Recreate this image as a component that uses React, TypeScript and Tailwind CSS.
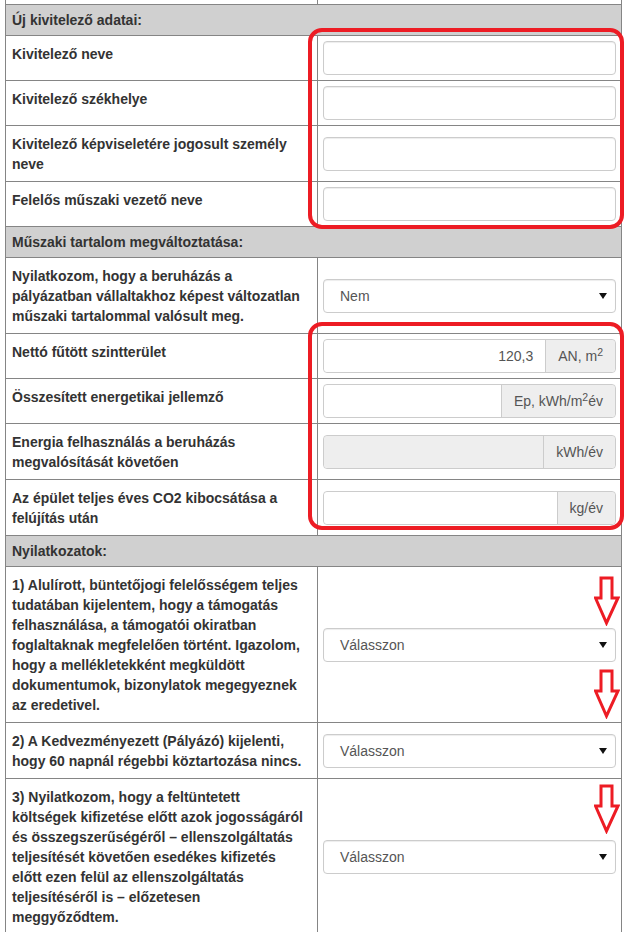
import React from "react";

const cellBorder = "border-[#858585]";

function Header({ title }: { title: string }) {
	return (
		<div className={`bg-[#d0d0d0] border-b ${cellBorder} px-[6px] py-[5px] font-bold text-[#333]`}>
			{title}
		</div>
	);
}

function Row({ label, children }: { label: React.ReactNode; children: React.ReactNode }) {
	return (
		<div className={`grid grid-cols-[312px_1fr] border-b ${cellBorder}`}>
			<div className={`border-r ${cellBorder} pl-[6px] pr-[4px] pt-2 pb-[7px] font-bold text-[#333]`}>{label}</div>
			<div className="flex items-center p-[5px]">{children}</div>
		</div>
	);
}

function TextInput() {
	return <div className="h-[34px] w-full rounded-[4px] border border-[#ccc] bg-white shadow-[inset_0_1px_1px_rgba(0,0,0,0.075)]" />;
}

function SelectBox({ value }: { value: string }) {
	return (
		<div className="flex h-[34px] w-full items-center justify-between rounded-[4px] border border-[#ccc] bg-white pl-4 pr-[8px] text-[#555] shadow-[inset_0_1px_1px_rgba(0,0,0,0.075)]">
			<span>{value}</span>
			<svg width="8" height="6" viewBox="0 0 8 6">
				<path d="M0 0 H8 L4 6 Z" fill="#111" />
			</svg>
		</div>
	);
}

function AddonInput({ value, addon, disabled }: { value?: string; addon: React.ReactNode; disabled?: boolean }) {
	return (
		<div className="flex h-[34px] w-full rounded-[4px] border border-[#ccc] shadow-[inset_0_1px_1px_rgba(0,0,0,0.075)]">
			<div className={`flex flex-1 items-center justify-end rounded-l-[4px] px-3 text-[#555] ${disabled ? "bg-[#eee]" : "bg-white"}`}>
				{value}
			</div>
			<div className="flex items-center rounded-r-[4px] border-l border-[#ccc] bg-[#eee] px-3 text-[#555] whitespace-nowrap">
				{addon}
			</div>
		</div>
	);
}

function Arrow({ top }: { top: number }) {
	return (
		<svg className="absolute left-[594px]" style={{ top }} width="26" height="50" viewBox="0 0 26 50">
			<path d="M7 2 H18 V22 H24 L12.5 47 L1.5 22 H7 Z" fill="none" stroke="#ed1c24" strokeWidth="3" strokeLinejoin="miter" />
		</svg>
	);
}

export default function App() {
	return (
		<div className="relative h-[932px] w-[629px] overflow-hidden bg-white text-[14px] leading-[20px] font-['Liberation_Sans',Arial,sans-serif]">
			<div className={`ml-[5px] w-[617px] border-x ${cellBorder}`}>
				<div className={`grid h-[5px] grid-cols-[312px_1fr] border-b ${cellBorder}`}>
					<div className={`border-r ${cellBorder}`} />
					<div />
				</div>

				<Header title="Új kivitelező adatai:" />
				<Row label="Kivitelező neve"><TextInput /></Row>
				<Row label="Kivitelező székhelye"><TextInput /></Row>
				<Row label="Kivitelező képviseletére jogosult személy neve"><TextInput /></Row>
				<Row label="Felelős műszaki vezető neve"><TextInput /></Row>

				<Header title="Műszaki tartalom megváltoztatása:" />
				<Row label="Nyilatkozom, hogy a beruházás a pályázatban vállaltakhoz képest változatlan műszaki tartalommal valósult meg.">
					<SelectBox value="Nem" />
				</Row>
				<Row label="Nettó fűtött szintterület">
					<AddonInput value="120,3" addon={<span>AN, m<sup>2</sup></span>} />
				</Row>
				<Row label="Összesített energetikai jellemző">
					<AddonInput addon={<span>Ep, kWh/m<sup>2</sup>év</span>} />
				</Row>
				<Row label="Energia felhasználás a beruházás megvalósítását követően">
					<AddonInput disabled addon="kWh/év" />
				</Row>
				<Row label="Az épület teljes éves CO2 kibocsátása a felújítás után">
					<AddonInput addon="kg/év" />
				</Row>

				<Header title="Nyilatkozatok:" />
				<Row label="1) Alulírott, büntetőjogi felelősségem teljes tudatában kijelentem, hogy a támogatás felhasználása, a támogatói okiratban foglaltaknak megfelelően történt. Igazolom, hogy a mellékletekként megküldött dokumentumok, bizonylatok megegyeznek az eredetivel.">
					<SelectBox value="Válasszon" />
				</Row>
				<Row label="2) A Kedvezményezett (Pályázó) kijelenti, hogy 60 napnál régebbi köztartozása nincs.">
					<SelectBox value="Válasszon" />
				</Row>
				<Row
					label={
						<>
							3) Nyilatkozom, hogy a feltüntetett
							<br />
							költségek kifizetése előtt azok jogosságáról
							<br />
							és összegszerűségéről – ellenszolgáltatás
							<br />
							teljesítését követően esedékes kifizetés
							<br />
							előtt ezen felül az ellenszolgáltatás
							<br />
							teljesítéséről is – előzetesen
							<br />
							meggyőződtem.
						</>
					}
				>
					<SelectBox value="Válasszon" />
				</Row>
			</div>

			{/* red highlights */}
			<div className="absolute left-[308px] top-[28px] h-[201px] w-[316px] rounded-[14px] border-4 border-[#ed1c24]" />
			<div className="absolute left-[308px] top-[322px] h-[208px] w-[316px] rounded-[14px] border-4 border-[#ed1c24]" />
			<Arrow top={576} />
			<Arrow top={669} />
			<Arrow top={784} />
		</div>
	);
}
